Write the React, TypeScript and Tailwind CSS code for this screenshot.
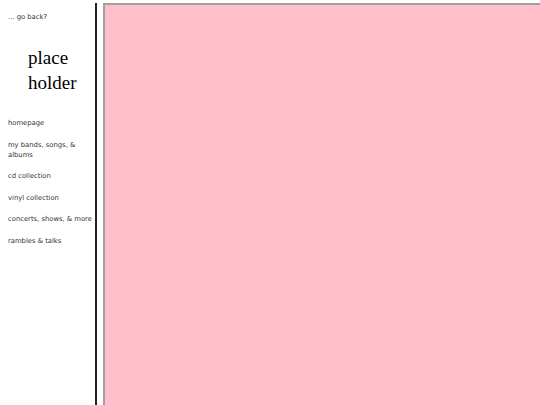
export default function App() {
  const links = [
    "homepage",
    "my bands, songs, & albums",
    "cd collection",
    "vinyl collection",
    "concerts, shows, & more",
    "rambles & talks",
  ];
  return (
    <div className="flex h-[405px] w-[540px] overflow-hidden bg-white pt-[3px]">
      <div className="flex h-[410px] w-[97px] shrink-0 flex-col border-r-[2px] border-[#222] pl-[8px] font-['Verdana','DejaVu_Sans',sans-serif] text-[#333]">
        <div className="mt-[10px] text-[6.8px] leading-[9px]">... go back?</div>
        <div className="mt-[23px] pl-[20px] font-['Liberation_Serif',serif] text-[19px] leading-[25px] text-black">
          <div>place</div>
          <div>holder</div>
        </div>
        <div className="mt-[23px] flex flex-col gap-[11.5px] text-[6.8px] leading-[10px]">
          {links.map((l) => (
            <div key={l}>{l}</div>
          ))}
        </div>
      </div>
      <div className="ml-[6px] h-[410px] flex-1 border-l-[2px] border-t-[2px] border-l-[#a0a0a0] border-t-[#a0a0a0] bg-[#ffc0cb]" />
    </div>
  );
}
